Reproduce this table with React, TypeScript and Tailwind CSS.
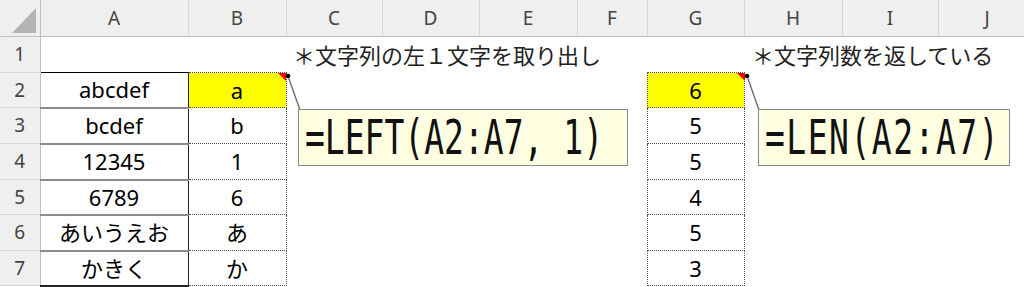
const cols = [40, 148, 98, 96, 97, 98, 70, 97, 98, 96, 98];
const letters = ["A", "B", "C", "D", "E", "F", "G", "H", "I", "J"];
const heights = [36, 35, 36, 36, 35, 36, 35];
const aVals = ["abcdef", "bcdef", "12345", "6789", "あいうえお", "かきく"];
const bVals = ["a", "b", "1", "6", "あ", "か"];
const gVals = ["6", "5", "5", "4", "5", "3"];

const cellFont = "font-['Noto_Sans','Noto_Sans_CJK_JP',sans-serif] text-[22px] text-black";

function RowHead({ n }: { n: number }) {
  return (
    <td className="bg-[#efefef] border-r border-b border-r-[#bfbfbf] border-b-[#d6d6d6] text-center text-[19px] text-[#444] font-['Noto_Sans',sans-serif] p-0">
      {n}
    </td>
  );
}

function Comment({ text, className, track }: { text: string; className: string; track: string }) {
  return (
    <div
      className={
        "absolute top-[109px] h-[57px] bg-[#ffffe1] border-[1.5px] border-[#8a8a8a] flex items-center pl-[6px] " +
        className
      }
    >
      <span
        className={
          "font-['DejaVu_Sans_Mono',monospace] text-[33px] leading-none text-[#111] whitespace-pre scale-y-[1.45] inline-block " +
          track
        }
      >
        {text}
      </span>
    </div>
  );
}

export default function App() {
  return (
    <div className="relative w-[1024px] h-[287px] overflow-hidden bg-white">
      <table className="table-fixed border-collapse w-[1036px]">
        <colgroup>
          {cols.map((w, i) => (
            <col key={i} style={{ width: w }} />
          ))}
        </colgroup>
        <thead>
          <tr className="h-[36px]">
            <th className="bg-[#efefef] border-r border-b border-r-[#bfbfbf] border-b-[#bfbfbf] p-0 relative">
              <svg width="40" height="36" className="block">
                <polygon points="12,33 36,33 36,8" fill="#b4b4b4" />
              </svg>
            </th>
            {letters.map((l) => (
              <th
                key={l}
                className="bg-[#efefef] border-r border-b border-r-[#d6d6d6] border-b-[#bfbfbf] font-normal text-[19px] text-[#444] font-['Noto_Sans',sans-serif] p-0"
              >
                {l}
              </th>
            ))}
          </tr>
        </thead>
        <tbody>
          <tr style={{ height: heights[0] }}>
            <RowHead n={1} />
            <td className="p-0" />
            <td className="p-0" />
            <td className="p-0 overflow-visible">
              <div className="w-0 overflow-visible whitespace-nowrap pl-[7px] font-['Noto_Sans_CJK_JP',sans-serif] text-[22px] text-[#222]">
                ＊文字列の左１文字を取り出し
              </div>
            </td>
            <td className="p-0" />
            <td className="p-0" />
            <td className="p-0" />
            <td className="p-0" />
            <td className="p-0 overflow-visible">
              <div className="w-0 overflow-visible whitespace-nowrap pl-[8px] font-['Noto_Sans_CJK_JP',sans-serif] text-[22px] text-[#222]">
                ＊文字列数を返している
              </div>
            </td>
            <td className="p-0" />
            <td className="p-0" />
          </tr>
          {aVals.map((a, i) => (
            <tr key={i} style={{ height: heights[i + 1] }}>
              <RowHead n={i + 2} />
              <td
                className={
                  "p-0 text-center border-x border-x-[#222] " +
                  cellFont +
                  (i === 0 ? " border-t border-t-black" : " border-t-2 border-t-[#8c8c8c]") +
                  (i === 5 ? " border-b-2 border-b-[#222]" : "")
                }
              >
                {a}
              </td>
              <td
                className={
                  "p-0 text-center border border-dotted border-[#555] " +
                  cellFont +
                  (i === 0 ? " bg-[#ffff00]" : "")
                }
              >
                {bVals[i]}
              </td>
              <td className="p-0" />
              <td className="p-0" />
              <td className="p-0" />
              <td className="p-0" />
              <td
                className={
                  "p-0 text-center border border-dotted border-[#555] " +
                  cellFont +
                  (i === 0 ? " bg-[#ffff00]" : "")
                }
              >
                {gVals[i]}
              </td>
              <td className="p-0" />
              <td className="p-0" />
              <td className="p-0" />
            </tr>
          ))}
        </tbody>
      </table>

      <svg className="absolute left-0 top-0 pointer-events-none" width="1024" height="287">
        <polygon points="278,73 286,73 286,81" fill="#ff0000" />
        <polygon points="737,73 745,73 745,81" fill="#ff0000" />
        <line x1="288" y1="76" x2="300" y2="110" stroke="#666" strokeWidth="1.3" />
        <line x1="747" y1="76" x2="759" y2="110" stroke="#666" strokeWidth="1.3" />
        <circle cx="288" cy="76" r="2.3" fill="#000" />
        <circle cx="747" cy="76" r="2.3" fill="#000" />
      </svg>

      <Comment text="=LEFT(A2:A7, 1)" className="left-[298px] w-[330px]" track="" />
      <Comment text="=LEN(A2:A7)" className="left-[758px] w-[252px]" track="tracking-[1.5px]" />
    </div>
  );
}
